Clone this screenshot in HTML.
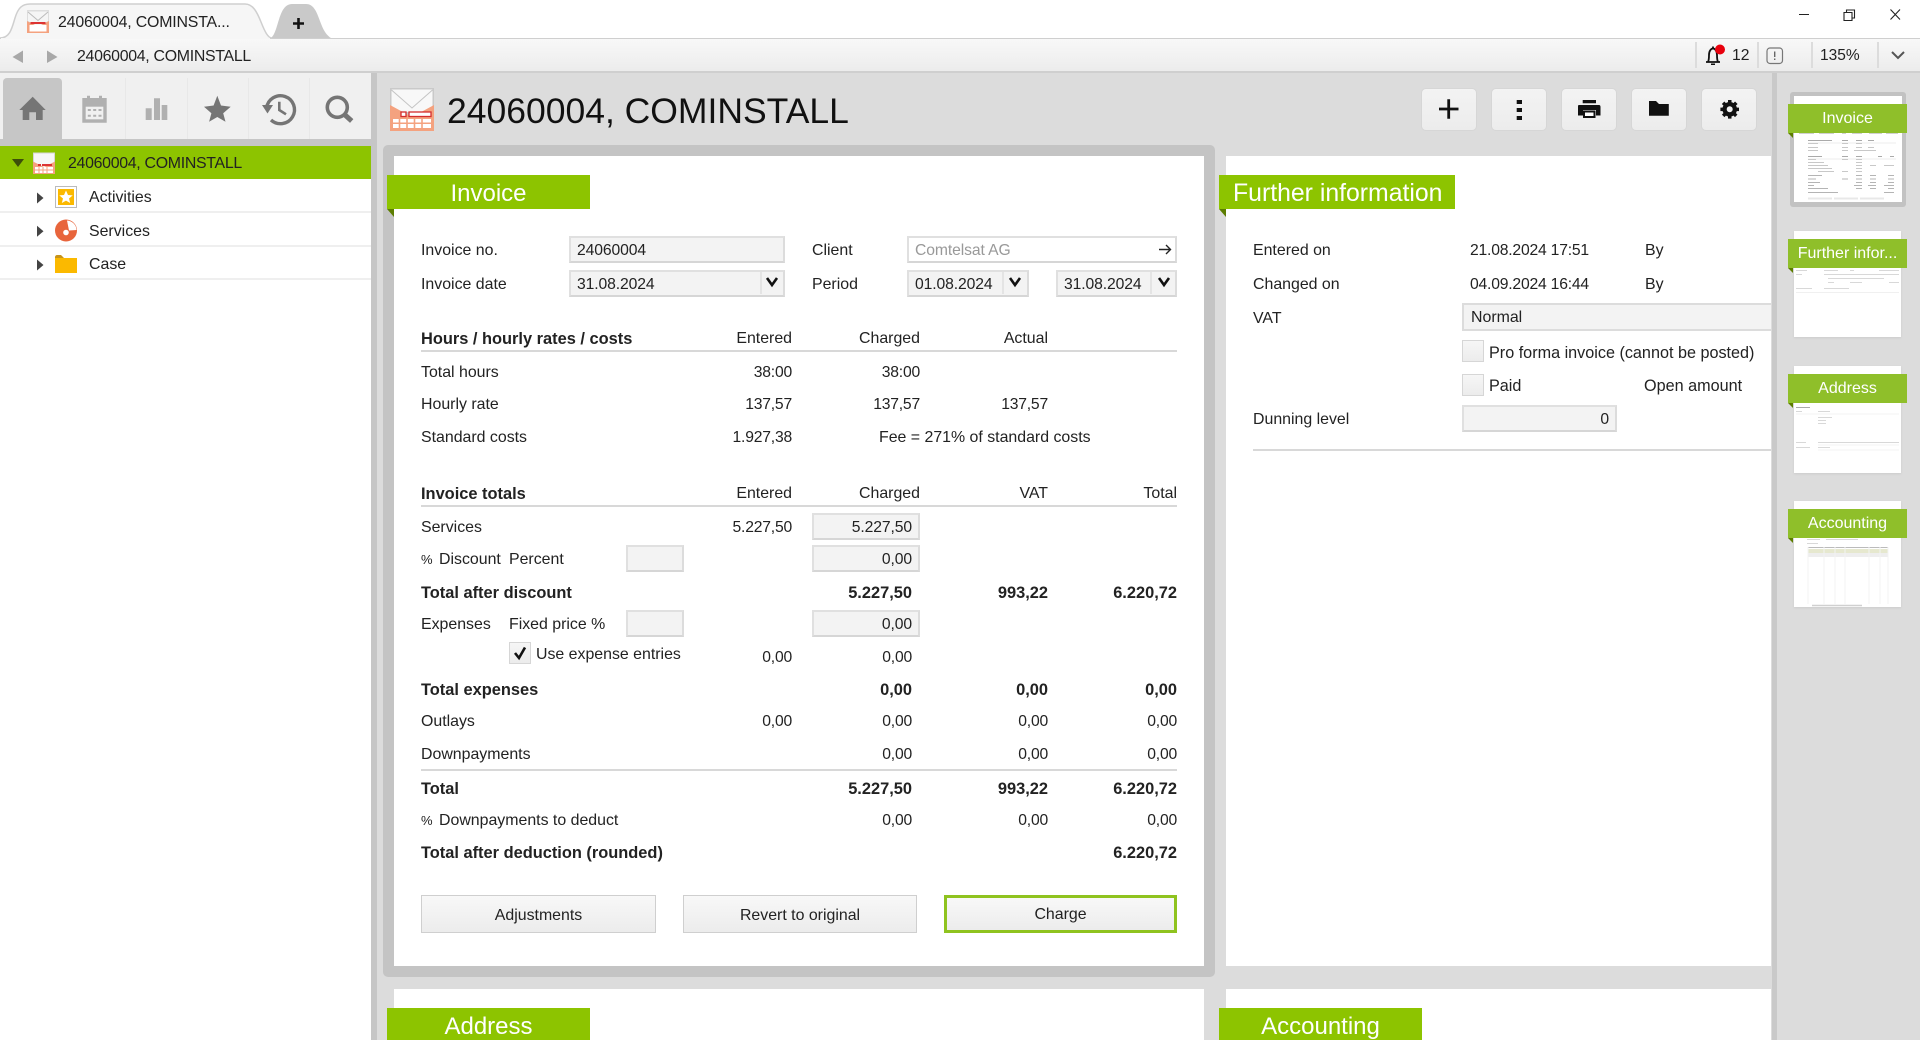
<!DOCTYPE html>
<html><head><meta charset="utf-8"><title>24060004, COMINSTALL</title>
<style>
*{box-sizing:border-box}
html,body{margin:0;padding:0;overflow:hidden;width:1920px;height:1040px}
body{background:#fff;font-family:"Liberation Sans",sans-serif;font-size:15.9px;color:#222}
#w{position:relative;width:1920px;height:1040px;overflow:hidden}
.a{position:absolute}
.t{position:absolute;white-space:nowrap;line-height:20px;margin-top:1px}
.b{font-weight:bold;font-size:16.4px}
.d{font-size:15.7px;letter-spacing:-.2px}
.i{position:absolute;background:#f3f3f3;border:2px solid;border-color:#e0e0e0 #dcdcdc #d6d6d6 #e0e0e0;line-height:25px;padding-left:6px;white-space:nowrap;font-size:15.7px;letter-spacing:-.1px}
.n{text-align:right;padding:0 6px 0 0}
.rb{position:absolute;background:#8dc400;color:#fff;font-size:24px;line-height:38px;height:34px;text-align:center;white-space:nowrap}
.rb:after{content:"";position:absolute;left:0;top:34px;width:0;height:0;border-top:8px solid #5c7d00;border-left:7px solid transparent}
.tr{position:absolute;background:#8fbf2a;color:#fff;font-size:16px;line-height:30px;height:29px;text-align:center;white-space:nowrap;left:1788px;width:119px}
.tr:after{content:"";position:absolute;left:0;top:29px;width:0;height:0;border-top:5px solid #5c7d00;border-left:5px solid transparent}
.hb{position:absolute;top:88px;width:56px;height:43px;background:linear-gradient(#f3f3f3,#ececec);border:1px solid #d6d6d6;border-radius:5px}
.l{position:absolute;height:2px;background:#d8d8d8}
.btn{position:absolute;top:895px;height:38px;background:linear-gradient(#f8f8f8,#ececec);border:1px solid #cfcfcf;text-align:center;line-height:39px}
.sep{position:absolute;top:42px;height:26px;width:2px;background:#dcdcdc}
.tsep{position:absolute;top:78px;height:61px;width:1px;background:#e8e8e8}
.rl{position:absolute;left:0;width:371px;height:2px;background:#efefef}
.cb{position:absolute;width:22px;height:22px;background:linear-gradient(#f6f6f6,#ececec);border:1px solid #d6d6d6}
.m{position:absolute;background:#fff;box-shadow:0 1px 2px #ccc}
</style></head><body><div id="w">

<!-- title bar -->
<svg class="a" style="left:0;top:0" width="340" height="39">
<path d="M271 38C279 32 278 4 292 4H306C320 4 318 30 331 38Z" fill="#c9c9c9"/>
<path d="M0 38C10 38 12 28 15 18C18 8 22 4 30 4H245C253 4 257 12 261 22C265 32 268 38 272 38" fill="#f6f6f6" stroke="#cfcfcf" stroke-width="1.5"/>
<path d="M293 23.500H304M298.500 18V29" stroke="#111" stroke-width="2.600"/>
</svg>
<div class="a" style="left:0;top:38px;width:1920px;height:1px;background:#cfcfcf"></div>
<div class="a" style="left:1px;top:38px;width:269px;height:2px;background:#f6f6f6"></div>
<svg class="a" style="left:27px;top:10px" width="22" height="23" viewBox="0 0 44 46">
<rect width="44" height="46" fill="#ddd"/><path d="M2 3H42V22L22 34L2 22Z" fill="#f5f5f5"/><path d="M2 4L22 21L42 4" fill="none" stroke="#bbb" stroke-width="2"/>
<path d="M0 22L22 33L44 22V46H0Z" fill="#f4a27f"/><rect x="5" y="30" width="34" height="13" fill="#fff"/><rect x="7" y="24" width="30" height="4" fill="#d33"/></svg>
<div class="t" style="left:58px;top:12px;letter-spacing:-.18px">24060004, COMINSTA...</div>
<svg class="a" style="left:1795px;top:5px" width="115" height="20" fill="none" stroke="#222" stroke-width="1.100">
<path d="M4 9.500H14M49 7.500H57V15.500H49ZM51.500 7.500V5H59.500V13H57M95.500 4.500L105 14.500M105 4.500L95.500 14.500"/></svg>

<!-- address bar -->
<div class="a" style="left:0;top:39px;width:1920px;height:32px;background:linear-gradient(#f8f8f8,#ececec)"></div>
<div class="a" style="left:0;top:71px;width:1920px;height:2px;background:#cfcfcf"></div>
<svg class="a" style="left:10px;top:48px" width="52" height="18"><path d="M13 2.500V15L2.500 9Z" fill="#a8a8a8"/><path d="M37 2.500V15L47.500 9Z" fill="#a8a8a8"/></svg>
<div class="t" style="left:77px;top:46px;letter-spacing:-.3px">24060004, COMINSTALL</div>
<div class="sep" style="left:1695px"></div><div class="sep" style="left:1757px"></div><div class="sep" style="left:1811px"></div><div class="sep" style="left:1877px"></div>
<svg class="a" style="left:1702px;top:43px" width="28" height="24">
<path d="M4 19H18M6 19C7 17 7 15 7 12C7 8 9 5.500 11 5.500C13 5.500 15 8 15 12C15 15 15 17 16 19M11 3.500V5.500" fill="none" stroke="#111" stroke-width="1.800"/><path d="M9 20.500H13V22H9Z" fill="#111"/><circle cx="18" cy="6.500" r="5" fill="#e8000d"/></svg>
<div class="t" style="left:1732px;top:45px;font-size:15.700px">12</div>
<svg class="a" style="left:1766px;top:47px" width="18" height="18"><rect x="1" y="1" width="15.500" height="15.500" rx="3" fill="none" stroke="#777" stroke-width="1.200"/><path d="M8.700 4.500V10M8.700 11.500V13" stroke="#666" stroke-width="1.400"/></svg>
<div class="t" style="left:1820px;top:45px;font-size:15.500px">135%</div>
<svg class="a" style="left:1890px;top:50px" width="16" height="11"><path d="M2 2L8 8L14 2" fill="none" stroke="#555" stroke-width="2"/></svg>

<!-- sidebar -->
<div class="a" style="left:0;top:73px;width:371px;height:66px;background:#f0f0f0"></div>
<div class="a" style="left:3px;top:78px;width:59px;height:61px;background:#c6c6c6;border-radius:4px 4px 0 0"></div>
<div class="tsep" style="left:125px"></div><div class="tsep" style="left:187px"></div><div class="tsep" style="left:248px"></div><div class="tsep" style="left:309px"></div>
<div class="a" style="left:0;top:139px;width:371px;height:7px;background:#c6c6c6"></div>
<div class="a" style="left:371px;top:73px;width:6px;height:967px;background:#c6c6c6"></div>
<svg class="a" style="left:0;top:75px" width="371" height="64">
<path d="M32.700 21.700L45.700 35H42.700V45H36V37.300H29.300V45H22.700V35H19.300Z" fill="#757575"/>
<path d="M87 20.700H90V23H99V20.700H102V23H106.700V47.700H82.300V23H87Z" fill="#b0b0b0"/>
<rect x="85.700" y="31.700" width="17.600" height="12.600" fill="#f0f0f0"/>
<path d="M87.800 35H90.800M93.200 35H96.200M98.500 35H101.500M87.800 40.700H90.800M93.200 40.700H96.200M98.500 40.700H101.500" stroke="#b0b0b0" stroke-width="2"/>
<path d="M145.700 33.300H151.700V45H145.700ZM154 23.300H160V45H154ZM161.700 30H167.300V45H161.700Z" fill="#b0b0b0"/>
<path d="M217.300 20.700L221 30.500L230.700 31.700L223.200 38.200L225.500 46.700L217.300 42L209.100 46.700L211.400 38.200L204 31.700L213.600 30.500Z" fill="#757575"/>
<path d="M266.600 33A14 14 0 1 1 271 45" fill="none" stroke="#757575" stroke-width="3.400"/><path d="M262 30H273L267.500 38.500Z" fill="#757575"/><path d="M279.300 26.700V35L286 39.300" fill="none" stroke="#757575" stroke-width="2.600"/>
<circle cx="337.300" cy="32.300" r="10" fill="none" stroke="#757575" stroke-width="3.600"/><path d="M344.500 39.500L351.700 46" stroke="#757575" stroke-width="5"/>
</svg>
<div class="a" style="left:0;top:146px;width:371px;height:33px;background:#8dc400"></div>
<div class="rl" style="top:211px"></div><div class="rl" style="top:245px"></div><div class="rl" style="top:278px"></div>
<svg class="a" style="left:0;top:146px" width="100" height="134">
<path d="M12 13H24L18 21Z" fill="#3d4f0a"/>
<path d="M37 46.500V57.500L43.500 52Z M37 79.800V90.800L43.500 85.300Z M37 113.500V124.500L43.500 119Z" fill="#444"/>
<g transform="translate(33,6.500)"><rect width="22" height="21.500" fill="#d6d6d6"/><path d="M1 1H21V10L11 16L1 10Z" fill="#f7f7f7"/><path d="M0 9L11 14.500L22 9V21.500H0Z" fill="#f4a27f"/><rect x="2" y="14.500" width="18" height="6" fill="#fff"/><rect x="5" y="11.500" width="3" height="2" fill="#d33"/><rect x="9" y="11.500" width="10" height="2" fill="#d33"/><path d="M6 14.500V21M10 14.500V21M14 14.500V21M2 17.500H20" stroke="#f4a27f"/></g>
<rect x="55.500" y="40.500" width="21" height="21" fill="#fff" stroke="#bbb"/><rect x="58" y="43" width="16" height="16" fill="#fbb900"/>
<path d="M66 44.500L68 49L72.700 49.400L69 52.500L70.200 57L66 54.600L61.800 57L63 52.500L59.300 49.400L64 49Z" fill="#fff"/>
<circle cx="66" cy="84.500" r="11" fill="#e8653c"/><path d="M67 74.500A10 10 0 0 1 76.500 84L69 84.500Z" fill="#fff"/><circle cx="66" cy="86.500" r="2.800" fill="#fff"/>
<path d="M55 113V111C55 110 56 109 57 109H61L64 112V113Z" fill="#c7941a"/><rect x="55" y="112" width="22" height="15" fill="#fbb900"/>
</svg>
<div class="t" style="left:68px;top:153px;letter-spacing:-.3px">24060004, COMINSTALL</div>
<div class="t" style="left:89px;top:187px">Activities</div>
<div class="t" style="left:89px;top:221px">Services</div>
<div class="t" style="left:89px;top:254px">Case</div>

<!-- main -->
<div class="a" style="left:377px;top:73px;width:1395px;height:967px;background:#dcdcdc"></div>
<div class="a" style="left:1772px;top:73px;width:5px;height:967px;background:#c9c9c9"></div>
<div class="a" style="left:1777px;top:73px;width:143px;height:967px;background:#dcdcdc"></div>
<svg class="a" style="left:390px;top:88px" width="44" height="43" viewBox="0 0 44 43">
<rect width="44" height="43" fill="#c9c9c9"/><path d="M1.500 1.500H42.500V24H1.500Z" fill="#f8f8f8"/><path d="M1.500 2L22 20L42.500 2" fill="#f8f8f8" stroke="#c4c4c4" stroke-width="1"/>
<path d="M0 17L22 29L44 17V43H0Z" fill="#f4a27f"/>
<rect x="11" y="24" width="5" height="4.500" fill="#fff" stroke="#d42d2d" stroke-width="1.300"/><rect x="19" y="24" width="22" height="4.500" fill="#fff" stroke="#d42d2d" stroke-width="1.300"/>
<path d="M3 31H41V34.500H3ZM3 36H41V40H3Z" fill="#fff"/><path d="M9.500 31V40M17 31V40M24.500 31V40M32 31V40" stroke="#f4a27f" stroke-width="1.600"/></svg>
<div class="a" style="left:447px;top:89px;font-size:35.500px;line-height:44px;white-space:nowrap;color:#111">24060004, COMINSTALL</div>

<div class="hb" style="left:1421px"></div><div class="hb" style="left:1491px"></div><div class="hb" style="left:1561px"></div><div class="hb" style="left:1631px"></div><div class="hb" style="left:1701px"></div>
<svg class="a" style="left:1421px;top:88px" width="336" height="43">
<path d="M18 21H37.500M27.700 11.300V30.700" stroke="#111" stroke-width="2.800"/>
<rect x="95.700" y="12" width="5.300" height="4" fill="#111"/><rect x="95.700" y="20" width="5.300" height="4" fill="#111"/><rect x="95.700" y="28" width="5.300" height="4" fill="#111"/>
<path d="M161.700 12H175V15.300H161.700ZM158 17H178C179 17 179.500 17.800 179.500 19V27.500H175V22H162V27.500H157V19C157 17.800 157 17 158 17Z" fill="#111"/><path d="M163 23.500H173.500V29H163Z" fill="#fff" stroke="#111" stroke-width="2"/>
<path d="M228 13H235L238 16H247.800V27.700H228Z" fill="#111"/>
<g fill="#111"><circle cx="308.700" cy="21.300" r="7.300"/><rect x="307" y="12" width="3.500" height="18.600"/><rect x="307" y="12" width="3.500" height="18.600" transform="rotate(45 308.700 21.300)"/><rect x="307" y="12" width="3.500" height="18.600" transform="rotate(90 308.700 21.300)"/><rect x="307" y="12" width="3.500" height="18.600" transform="rotate(135 308.700 21.300)"/></g><circle cx="308.700" cy="21.300" r="3" fill="#f0f0f0"/>
</svg>

<!-- invoice panel -->
<div class="a" style="left:383px;top:145px;width:832px;height:832px;background:#c4c4c4;border-radius:5px"></div>
<div class="a" style="left:394px;top:156px;width:810px;height:810px;background:#fff"></div>
<div class="a" style="left:1226px;top:156px;width:545px;height:810px;background:#fff"></div>
<div class="a" style="left:394px;top:989px;width:810px;height:51px;background:#fff"></div>
<div class="a" style="left:1226px;top:989px;width:545px;height:51px;background:#fff"></div>

<div class="rb" style="left:387px;top:175px;width:203px">Invoice</div>
<div class="rb" style="left:1219px;top:175px;width:236px;text-align:left;padding-left:14px;font-size:24.800px">Further information</div>
<div class="rb" style="left:387px;top:1008px;width:203px">Address</div>
<div class="rb" style="left:1219px;top:1008px;width:203px">Accounting</div>

<div class="t" style="left:421px;top:240px">Invoice no.</div>
<div class="i" style="left:569px;top:236px;width:216px;height:27px">24060004</div>
<div class="t" style="left:812px;top:240px">Client</div>
<div class="i" style="left:907px;top:236px;width:270px;height:27px;background:#fff;color:#999">Comtelsat AG</div>
<svg class="a" style="left:1157px;top:241px" width="16" height="16"><path d="M2 8.500H13M9 4L13.500 8.500L9 13" fill="none" stroke="#222" stroke-width="1.400"/></svg>
<div class="t" style="left:421px;top:274px">Invoice date</div>
<div class="i" style="left:569px;top:270px;width:216px;height:27px">31.08.2024</div>
<div class="t" style="left:812px;top:274px">Period</div>
<div class="i" style="left:907px;top:270px;width:122px;height:27px">01.08.2024</div>
<div class="i" style="left:1056px;top:270px;width:121px;height:27px">31.08.2024</div>
<svg class="a" style="left:560px;top:270px" width="620" height="27" fill="none">
<path d="M201 2V24M443 2V24M591 2V24" stroke="#d4d4d4"/>
<path d="M207 8L212 15L217 8" stroke="#111" stroke-width="2.600"/><path d="M450 8L455 15L460 8" stroke="#111" stroke-width="2.600"/><path d="M599 8L604 15L609 8" stroke="#111" stroke-width="2.600"/></svg>

<div class="t b" style="left:421px;top:328px">Hours / hourly rates / costs</div>
<div class="t" style="right:1128px;top:328px">Entered</div>
<div class="t" style="right:1000px;top:328px">Charged</div>
<div class="t" style="right:872px;top:328px">Actual</div>
<div class="l" style="left:421px;top:350px;width:756px"></div>
<div class="t" style="left:421px;top:362px">Total hours</div>
<div class="t d" style="right:1128px;top:362px">38:00</div>
<div class="t d" style="right:1000px;top:362px">38:00</div>
<div class="t" style="left:421px;top:394px">Hourly rate</div>
<div class="t d" style="right:1128px;top:394px">137,57</div>
<div class="t d" style="right:1000px;top:394px">137,57</div>
<div class="t d" style="right:872px;top:394px">137,57</div>
<div class="t" style="left:421px;top:427px">Standard costs</div>
<div class="t d" style="right:1128px;top:427px">1.927,38</div>
<div class="t" style="left:879px;top:427px">Fee = 271% of standard costs</div>

<div class="t b" style="left:421px;top:483px">Invoice totals</div>
<div class="t" style="right:1128px;top:483px">Entered</div>
<div class="t" style="right:1000px;top:483px">Charged</div>
<div class="t" style="right:872px;top:483px">VAT</div>
<div class="t" style="right:743px;top:483px">Total</div>
<div class="l" style="left:421px;top:505px;width:756px"></div>

<div class="t" style="left:421px;top:517px">Services</div>
<div class="t d" style="right:1128px;top:517px">5.227,50</div>
<div class="i n" style="left:812px;top:513px;width:108px;height:27px">5.227,50</div>

<div class="t" style="left:421px;top:549px;font-size:13px">%</div>
<div class="t" style="left:439px;top:549px">Discount</div>
<div class="t" style="left:509px;top:549px">Percent</div>
<div class="i" style="left:626px;top:545px;width:58px;height:27px"></div>
<div class="i n" style="left:812px;top:545px;width:108px;height:27px">0,00</div>

<div class="t b" style="left:421px;top:582px">Total after discount</div>
<div class="t b" style="right:1008px;top:582px">5.227,50</div>
<div class="t b" style="right:872px;top:582px">993,22</div>
<div class="t b" style="right:743px;top:582px">6.220,72</div>

<div class="t" style="left:421px;top:614px">Expenses</div>
<div class="t" style="left:509px;top:614px">Fixed price %</div>
<div class="i" style="left:626px;top:610px;width:58px;height:27px"></div>
<div class="i n" style="left:812px;top:610px;width:108px;height:27px">0,00</div>

<div class="cb" style="left:509px;top:642px"></div>
<svg class="a" style="left:509px;top:642px" width="22" height="22"><path d="M6 11L10 16L16 5.500" fill="none" stroke="#111" stroke-width="2.600"/></svg>
<div class="t" style="left:536px;top:644px">Use expense entries</div>
<div class="t d" style="right:1128px;top:647px">0,00</div>
<div class="t d" style="right:1008px;top:647px">0,00</div>

<div class="t b" style="left:421px;top:679px">Total expenses</div>
<div class="t b" style="right:1008px;top:679px">0,00</div>
<div class="t b" style="right:872px;top:679px">0,00</div>
<div class="t b" style="right:743px;top:679px">0,00</div>

<div class="t" style="left:421px;top:711px">Outlays</div>
<div class="t d" style="right:1128px;top:711px">0,00</div>
<div class="t d" style="right:1008px;top:711px">0,00</div>
<div class="t d" style="right:872px;top:711px">0,00</div>
<div class="t d" style="right:743px;top:711px">0,00</div>

<div class="t" style="left:421px;top:744px">Downpayments</div>
<div class="t d" style="right:1008px;top:744px">0,00</div>
<div class="t d" style="right:872px;top:744px">0,00</div>
<div class="t d" style="right:743px;top:744px">0,00</div>
<div class="l" style="left:421px;top:769px;width:756px"></div>

<div class="t b" style="left:421px;top:778px">Total</div>
<div class="t b" style="right:1008px;top:778px">5.227,50</div>
<div class="t b" style="right:872px;top:778px">993,22</div>
<div class="t b" style="right:743px;top:778px">6.220,72</div>

<div class="t" style="left:421px;top:810px;font-size:13px">%</div>
<div class="t" style="left:439px;top:810px">Downpayments to deduct</div>
<div class="t d" style="right:1008px;top:810px">0,00</div>
<div class="t d" style="right:872px;top:810px">0,00</div>
<div class="t d" style="right:743px;top:810px">0,00</div>

<div class="t b" style="left:421px;top:842px">Total after deduction (rounded)</div>
<div class="t b" style="right:743px;top:842px">6.220,72</div>

<div class="btn" style="left:421px;width:235px">Adjustments</div>
<div class="btn" style="left:683px;width:234px">Revert to original</div>
<div class="btn" style="left:944px;width:233px;border:3px solid #8fc31f;line-height:34px">Charge</div>

<!-- further info -->
<div class="t" style="left:1253px;top:240px">Entered on</div>
<div class="t d" style="left:1470px;top:240px">21.08.2024 17:51</div>
<div class="t" style="left:1645px;top:240px">By</div>
<div class="t" style="left:1253px;top:274px">Changed on</div>
<div class="t d" style="left:1470px;top:274px">04.09.2024 16:44</div>
<div class="t" style="left:1645px;top:274px">By</div>
<div class="t" style="left:1253px;top:308px">VAT</div>
<div class="a" style="left:1462px;top:303px;width:309px;height:28px;background:#f3f3f3;border:2px solid #dcdcdc;border-right:0;padding-left:7px;line-height:26px">Normal</div>
<div class="cb" style="left:1462px;top:340px"></div>
<div class="t" style="left:1489px;top:342px;font-size:16.2px">Pro forma invoice (cannot be posted)</div>
<div class="cb" style="left:1462px;top:374px"></div>
<div class="t" style="left:1489px;top:375px;font-size:16.2px">Paid</div>
<div class="t" style="left:1644px;top:375px;font-size:16.2px">Open amount</div>
<div class="t" style="left:1253px;top:409px">Dunning level</div>
<div class="i n" style="left:1462px;top:405px;width:155px;height:27px">0</div>
<div class="l" style="left:1253px;top:449px;width:518px"></div>

<!-- thumbnails -->
<div class="a" style="left:1790px;top:92px;width:116px;height:115px;background:#c2c2c2;border-radius:3px"></div>
<div class="a" style="left:1794px;top:96px;width:108px;height:106px;background:#fff"></div>
<div class="m" style="left:1794px;top:231px;width:107px;height:106px"></div>
<div class="m" style="left:1794px;top:366px;width:107px;height:107px"></div>
<div class="m" style="left:1794px;top:501px;width:107px;height:106px"></div>
<svg class="a" style="left:1794px;top:96px" width="108" height="106" stroke="#c8c8c8" stroke-width="1">
<path d="M5 37.500H20M25 37.500H40M48 37.500H52M58 37.500H68M75 37.500H88M92 37.500H104" stroke="#d0d0d0"/>
<path d="M14 44.500H38M48 44.500H54M62 44.500H68M74 44.500H80" stroke="#aaa"/>
<path d="M14 47H102" stroke="#eee"/>
<path d="M14 47.500H24M48 47.500H54M62 47.500H68M14 51.500H24M48 51.500H54M62 51.500H68M74 51.500H80M14 54.500H24M48 54.500H54M60 54.500H82"/>
<path d="M14 60.500H28M48 60.500H54M62 60.500H68M84 60.500H88M96 60.500H100" stroke="#aaa"/>
<path d="M14 63H102" stroke="#eee"/>
<path d="M14 63.500H22M48 63.500H54M62 63.500H68M14 66.500H30M62 66.500H68M14 69.500H34M62 69.500H68M76 69.500H82M90 69.500H100M14 72.500H38M62 72.500H68M24 75.500H40M48 75.500H54M62 75.500H68"/>
<path d="M14 79.500H28M62 79.500H68M76 79.500H82M94 79.500H100M14 83H22M48 83H54M62 83H68M76 83H82M94 83H100M14 86.500H26M62 86.500H68M76 86.500H82M94 86.500H100M14 89.500H20M60 89.500H68M74 89.500H82M90 89.500H100M14 92.500H34M62 92.500H68M76 92.500H82M94 92.500H100M14 96.500H44M90 96.500H100" stroke="#b4b4b4"/>
<path d="M14 102.500H38M40 102.500H64M66 102.500H90" stroke="#e8e8e8" stroke-width="2"/>
</svg>
<svg class="a" style="left:1794px;top:231px" width="107" height="106" stroke="#d8d8d8">
<path d="M2 39.500H13M30 39.500H44M56 39.500H60M85 39.500H105M2 43.500H8M30 43.500H105M34 47.500H90M34 51.500H40M56 51.500H68M95 51.500H105M2 57.500H18M30 57.500H55"/><path d="M2 61.500H105" stroke="#f0f0f0"/></svg>
<svg class="a" style="left:1794px;top:366px" width="107" height="107" stroke="#d8d8d8">
<path d="M2 41.500H16" stroke="#aaa"/><path d="M2 45.500H8M24 45.500H36M24 51.500H38M24 54.500H32M24 57.500H32M2 76.500H12M24 76.500H105M2 81.500H16M24 81.500H36"/><path d="M2 48H105M24 79H105M24 84H105" stroke="#f3f3f3"/></svg>
<svg class="a" style="left:1794px;top:501px" width="107" height="106">
<path d="M13 38.500H26M13 42.500H24M32 38.500H64" stroke="#d8d8d8"/><path d="M14 46.500H94" stroke="#bbb"/>
<rect x="14" y="48" width="80" height="4" fill="#e6e8cf"/><rect x="14" y="52" width="80" height="4" fill="#eee"/>
<path d="M14 46V103M30 46V103M41 46V103M51 46V103M75 46V103M86 46V103M94 46V103" stroke="#f3f3f3"/><path d="M18 104.500H68" stroke="#d0d0d0" stroke-width="1.500"/></svg>
<div class="tr" style="top:104px">Invoice</div>
<div class="tr" style="top:239px">Further infor...</div>
<div class="tr" style="top:374px">Address</div>
<div class="tr" style="top:509px">Accounting</div>
</div></body></html>
